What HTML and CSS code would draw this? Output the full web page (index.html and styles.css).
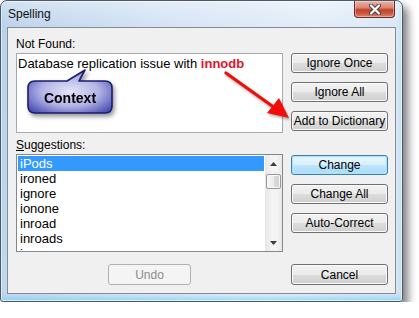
FILE: index.html
```html
<!DOCTYPE html>
<html lang="en">
<head>
    <meta charset="UTF-8">
    <title>Spelling</title>
    <link rel="stylesheet" href="styles.css">
</head>
<body>

    <div class="window">
        <div class="titlebar">
            <span class="title">Spelling</span>
            <button class="close" type="button">
                <svg width="12" height="11" viewBox="0 0 12 11">
                    <path d="M2 1.5 L10 9.5 M10 1.5 L2 9.5" stroke="#404448" stroke-width="4.2" stroke-linecap="round"/>
                    <path d="M2 1.5 L10 9.5 M10 1.5 L2 9.5" stroke="#ffffff" stroke-width="2.2" stroke-linecap="round"/>
                </svg>
            </button>
        </div>

        <div class="client">
            <div class="row">
                <div class="field">
                    <div class="label">Not Found:</div>
                    <div class="textbox">
                        Database replication issue with <b class="word">innodb</b>
                        <svg class="callout" width="96" height="54" viewBox="0 0 96 54">
                            <defs>
                                <radialGradient id="bubble" cx="50%" cy="50%" r="62%">
                                    <stop offset="0%" stop-color="#e4e4f8"/>
                                    <stop offset="55%" stop-color="#b3b4e6"/>
                                    <stop offset="100%" stop-color="#4f53b5"/>
                                </radialGradient>
                            </defs>
                            <path d="M11 15 H43 L61 4 L55 15 H81 Q88 15 88 22 V40 Q88 47 81 47 H11 Q4 47 4 40 V22 Q4 15 11 15 Z"
                                  fill="url(#bubble)" stroke="#1b1d6e" stroke-width="1.6" stroke-linejoin="round"/>
                            <text x="46" y="37" text-anchor="middle" class="callout-text">Context</text>
                        </svg>
                    </div>
                </div>
                <div class="actions">
                    <button class="btn" type="button">Ignore Once</button>
                    <button class="btn" type="button">Ignore All</button>
                    <button class="btn" type="button">Add to Dictionary</button>
                </div>
            </div>

            <!-- red pointer over the dictionary button -->
            <svg class="arrow" width="75" height="55" viewBox="0 0 75 55">
                <line x1="6" y1="5" x2="55" y2="40" stroke="#f20d0d" stroke-width="3.2" stroke-linecap="round"/>
                <polygon points="69,50 47,45 59,30" fill="#f20d0d"/>
            </svg>

            <div class="row second">
                <div class="field">
                    <div class="label"><u>S</u>uggestions:</div>
                    <div class="listbox">
                        <ul>
                            <li class="selected">iPods</li>
                            <li>ironed</li>
                            <li>ignore</li>
                            <li>ionone</li>
                            <li>inroad</li>
                            <li>inroads</li>
                            <li>irons</li>
                        </ul>
                        <div class="scrollbar">
                            <svg class="sb-arrow" width="17" height="17" viewBox="0 0 17 17">
                                <path d="M5 11 L8.5 7 L12 11 Z" fill="#3c3c3c"/>
                            </svg>
                            <div class="track">
                                <div class="thumb"></div>
                            </div>
                            <svg class="sb-arrow" width="17" height="17" viewBox="0 0 17 17">
                                <path d="M5 7 L8.5 11 L12 7 Z" fill="#3c3c3c"/>
                            </svg>
                        </div>
                    </div>
                </div>
                <div class="actions lower">
                    <button class="btn default" type="button">Change</button>
                    <button class="btn" type="button">Change All</button>
                    <button class="btn" type="button">Auto-Correct</button>
                </div>
            </div>

            <div class="footer">
                <div class="undo-wrap">
                    <button class="btn undo" type="button" disabled>Undo</button>
                </div>
                <button class="btn cancel" type="button">Cancel</button>
            </div>
        </div>
    </div>

</body>
</html>
```

FILE: styles.css
```css
body {
    margin: 0;
    background: #ffffff;
    font-family: "Liberation Sans", Arial, sans-serif;
    font-size: 12px;
    color: #000;
}
.window {
    width: 403px;
    height: 302px;
    box-sizing: border-box;
    padding: 0 6px;
    border: 1px solid #4b5866;
    border-radius: 7px 7px 3px 3px;
    background:
        linear-gradient(to bottom, rgba(255,255,255,0.35), rgba(255,255,255,0) 26px),
        linear-gradient(100deg, #bcd2eb 0%, #d3e3f4 35%, #e3edf9 70%, #d2e4f4 100%);
    box-shadow: 5px 6px 9px rgba(0,0,0,0.5), inset 0 0 0 1px rgba(255,255,255,0.6), inset 0 -4px 4px rgba(110,205,240,0.55);
}
.titlebar {
    height: 26px;
    display: flex;
    justify-content: space-between;
    align-items: flex-start;
}
.title {
    margin: 6px 0 0 1px;
    line-height: 14px;
    color: #111;
}
.close {
    width: 41px;
    height: 17px;
    margin-right: 1px;
    padding: 0;
    border: 1px solid #6b2b20;
    border-top: none;
    border-radius: 0 0 4px 4px;
    background: linear-gradient(to bottom, #ebb4a8 0%, #da8472 42%, #c3412a 55%, #cc5a43 80%, #dd8a76 100%);
    box-shadow: inset 0 0 0 1px rgba(255,255,255,0.35);
    display: flex;
    align-items: center;
    justify-content: center;
}
.client {
    position: relative;
    height: 267px;
    box-sizing: border-box;
    padding: 9px 7px 8px 8px;
    border: 1px solid #868b92;
    background: #f0f0f0;
}
.row {
    display: flex;
    gap: 8px;
}
.row.second {
    margin-top: 5px;
}
.field {
    width: 267px;
}
.label {
    height: 14px;
    line-height: 14px;
    margin-bottom: 2px;
}
.textbox {
    position: relative;
    height: 80px;
    box-sizing: border-box;
    padding: 2px 1px;
    border: 1px solid #a5a8ae;
    background: #fff;
    font-size: 13px;
    line-height: 15px;
}
.word {
    color: #e3122c;
}
.callout {
    position: absolute;
    left: 7px;
    top: 12px;
    filter: drop-shadow(2px 3px 2px rgba(0,0,0,0.4));
}
.callout-text {
    font-family: "Liberation Sans", Arial, sans-serif;
    font-size: 14px;
    font-weight: bold;
    fill: #000;
}
.arrow {
    position: absolute;
    left: 212px;
    top: 40px;
    filter: drop-shadow(1px 2px 1px rgba(0,0,0,0.3));
}
.actions {
    width: 97px;
    display: flex;
    flex-direction: column;
    gap: 9px;
    padding-top: 16px;
}
.actions.lower {
    padding-top: 17px;
}
.btn {
    height: 20px;
    padding: 0;
    font-family: "Liberation Sans", Arial, sans-serif;
    font-size: 12px;
    color: #000;
    border: 1px solid #707070;
    border-radius: 3px;
    background: linear-gradient(to bottom, #f2f2f2 0%, #ebebeb 50%, #dddddd 50%, #cfcfcf 100%);
    box-shadow: inset 0 0 0 1px #fbfbfb;
}
.btn.default {
    border-color: #3c7fb1;
    background: linear-gradient(to bottom, #eaf6fd 0%, #d9f0fc 50%, #bee6fd 50%, #a7d9f5 100%);
    box-shadow: inset 0 0 0 1px #a9e3f9, inset 0 0 2px 1px #c8eefc;
}
.listbox {
    height: 98px;
    box-sizing: border-box;
    display: flex;
    border: 1px solid #828790;
    background: #fff;
}
.listbox ul {
    flex: 1;
    margin: 0;
    padding: 1px;
    list-style: none;
    overflow: hidden;
    font-size: 13px;
    line-height: 15px;
}
.listbox li {
    padding-left: 2px;
}
.listbox li.selected {
    background: #3399ff;
    color: #fff;
}
.scrollbar {
    width: 17px;
    display: flex;
    flex-direction: column;
    background: linear-gradient(to right, #e6e6e6, #f4f4f4 40%, #f4f4f4 70%, #e8e8e8);
}
.sb-arrow {
    display: block;
    flex: none;
}
.track {
    flex: 1;
}
.thumb {
    width: 15px;
    height: 15px;
    margin: 2px 0 0 1px;
    box-sizing: border-box;
    border: 1px solid #989898;
    border-radius: 2px;
    background: linear-gradient(to right, #f6f6f6 0%, #ececec 50%, #dadada 51%, #d0d0d0 100%);
    box-shadow: inset 0 0 0 1px #fafafa;
}
.footer {
    display: flex;
    gap: 8px;
    margin-top: 12px;
}
.undo-wrap {
    width: 267px;
    display: flex;
    justify-content: center;
}
.btn.undo {
    width: 83px;
    height: 21px;
    color: #8c8c8c;
    border-color: #adb2b5;
    background: #f4f4f4;
    box-shadow: none;
}
.btn.cancel {
    width: 97px;
    height: 21px;
}
```
